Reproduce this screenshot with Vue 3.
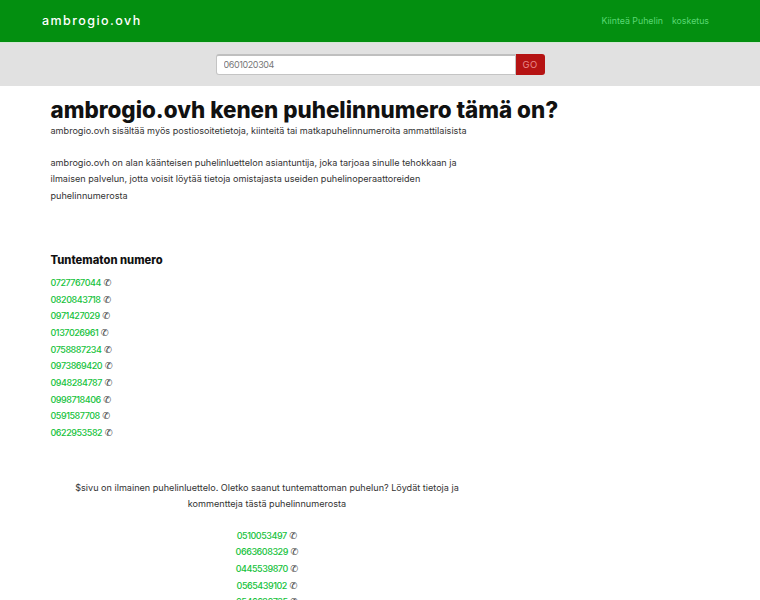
<template>
  <div class="page">
    <nav class="topbar">
      <a class="brand" href="#">ambrogio.ovh</a>
      <div class="nav-links">
        <a href="#">Kiinteä Puhelin</a>
        <a href="#">kosketus</a>
      </div>
    </nav>

    <form class="search" @submit.prevent>
      <input class="search-input" type="text" placeholder="0601020304" />
      <button class="search-btn" type="submit">GO</button>
    </form>

    <main class="content">
      <h1>ambrogio.ovh kenen puhelinnumero tämä on?</h1>
      <p class="lead">ambrogio.ovh sisältää myös postiosoitetietoja, kiinteitä tai matkapuhelinnumeroita ammattilaisista</p>
      <p class="intro">ambrogio.ovh on alan käänteisen puhelinluettelon asiantuntija, joka tarjoaa sinulle tehokkaan ja ilmaisen palvelun, jotta voisit löytää tietoja omistajasta useiden puhelinoperaattoreiden puhelinnumerosta</p>

      <h2>Tuntematon numero</h2>
      <ul class="numbers">
        <li v-for="num in unknownNumbers" :key="num">
          <a href="#">{{ num }}</a> <span class="phone">✆</span>
        </li>
      </ul>

      <div class="centered">
        <p>$sivu on ilmainen puhelinluettelo. Oletko saanut tuntemattoman puhelun? Löydät tietoja ja kommentteja tästä puhelinnumerosta</p>
        <ul class="numbers">
          <li v-for="num in recentNumbers" :key="num">
            <a href="#">{{ num }}</a> <span class="phone">✆</span>
          </li>
        </ul>
      </div>
    </main>
  </div>
</template>

<script setup>
const unknownNumbers = [
  '0727767044',
  '0820843718',
  '0971427029',
  '0137026961',
  '0758887234',
  '0973869420',
  '0948284787',
  '0998718406',
  '0591587708',
  '0622953582'
]

const recentNumbers = [
  '0510053497',
  '0663608329',
  '0445539870',
  '0565439102',
  '0546620735'
]
</script>

<style>
html,
body {
  margin: 0;
  height: 600px;
  overflow: hidden;
  background: #ffffff;
}
</style>

<style scoped>
.page {
  font-family: Inter, "Liberation Sans", sans-serif;
  color: #212529;
}

.topbar {
  display: flex;
  align-items: center;
  justify-content: space-between;
  box-sizing: border-box;
  height: 43px;
  padding: 0 51px 1px 42px;
  border-bottom: 1px solid #d3e6d4;
  background: #038f10;
}

.brand {
  color: #ffffff;
  font-size: 12.5px;
  font-weight: 500;
  letter-spacing: 1.45px;
  text-decoration: none;
}

.nav-links {
  display: flex;
  gap: 9px;
}

.nav-links a {
  color: #5ad874;
  font-size: 8.8px;
  text-decoration: none;
}

.search {
  display: flex;
  justify-content: center;
  align-items: center;
  height: 43px;
  background: #e1e1e1;
}

.search-input {
  box-sizing: border-box;
  width: 300px;
  height: 21px;
  padding: 0 7px 1px;
  border: 1px solid #c4c4c4;
  border-top: 2px solid #bfbfbf;
  border-radius: 3px 0 0 3px;
  background: #ffffff;
  font: 9px Inter, "Liberation Sans", sans-serif;
  letter-spacing: -0.4px;
  outline: none;
}

.search-input::placeholder {
  color: #777777;
  opacity: 1;
}

.search-btn {
  width: 29px;
  height: 21px;
  padding: 0;
  border: none;
  border-radius: 0 3px 3px 0;
  background: #b51313;
  color: #e88a8a;
  font: 9.5px Inter, "Liberation Sans", sans-serif;
  letter-spacing: 0.4px;
}

.content {
  padding: 0 0 0 50.5px;
}

h1 {
  margin: 0;
  padding-top: 11px;
  font-size: 22.4px;
  line-height: 26px;
  font-weight: 800;
  color: #111111;
}

.lead,
.intro,
.centered p {
  margin: 0;
  font-size: 9.1px;
  line-height: 16.5px;
  color: #333333;
}

.intro {
  width: 410px;
  margin-top: 15px;
}

h2 {
  margin: 48px 0 0;
  font-size: 11.2px;
  line-height: 16px;
  font-weight: 800;
  color: #111111;
}

.numbers {
  margin: 7px 0 0;
  padding: 0;
  list-style: none;
  font-size: 9px;
  line-height: 16.67px;
}

.numbers a {
  color: #16c23c;
  letter-spacing: -0.45px;
  text-decoration: none;
  font-weight: 500;
}

.phone {
  color: #333333;
  font-family: "DejaVu Sans", sans-serif;
  font-size: 9.5px;
  font-weight: 700;
}

.centered {
  width: 433px;
  margin-top: 38px;
  text-align: center;
}

.centered .numbers {
  margin-top: 15px;
}
</style>
